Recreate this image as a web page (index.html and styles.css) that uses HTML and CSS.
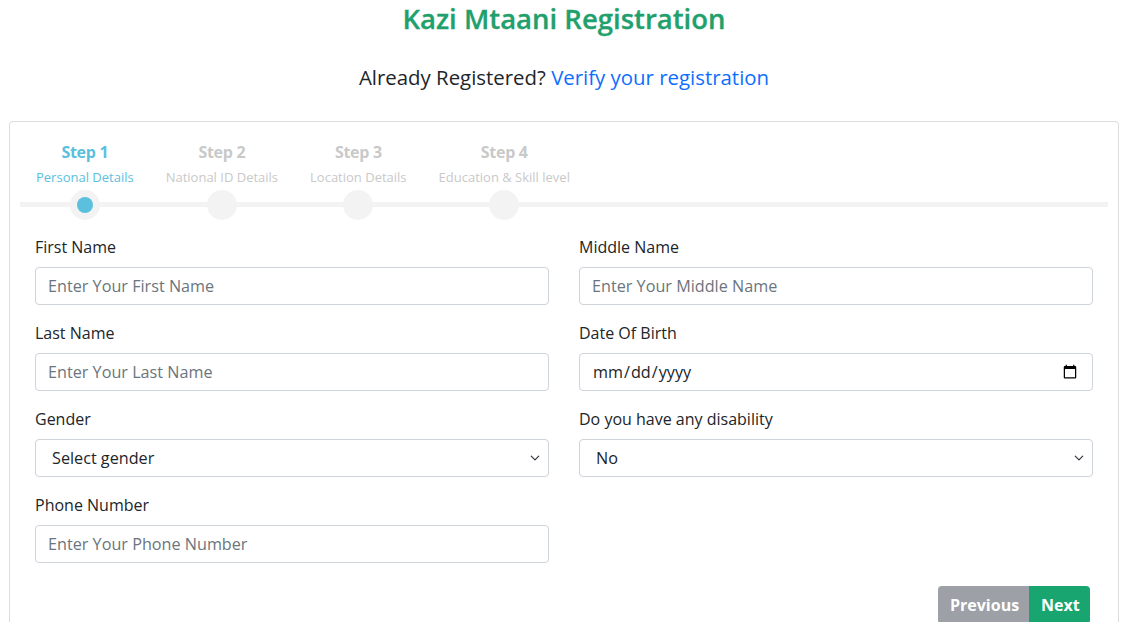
FILE: index.html
```html
<!DOCTYPE html>
<html>
<head>
<meta charset="utf-8">
<link rel="stylesheet" href="styles.css">
</head>
<body>
<div class="page">
  <h1 class="title">Kazi Mtaani Registration</h1>
  <p class="already">Already Registered? <a href="#" class="link">Verify your registration</a></p>
  <div class="card">
    <div class="steps">
      <div class="step active">
        <div class="step-title">Step 1</div>
        <div class="step-sub">Personal Details</div>
        <div class="dot"><span></span></div>
      </div>
      <div class="step">
        <div class="step-title">Step 2</div>
        <div class="step-sub">National ID Details</div>
        <div class="dot"></div>
      </div>
      <div class="step">
        <div class="step-title">Step 3</div>
        <div class="step-sub">Location Details</div>
        <div class="dot"></div>
      </div>
      <div class="step">
        <div class="step-title">Step 4</div>
        <div class="step-sub">Education &amp; Skill level</div>
        <div class="dot"></div>
      </div>
    </div>
    <form class="form">
      <div class="field">
        <label>First Name</label>
        <input type="text" placeholder="Enter Your First Name">
      </div>
      <div class="field">
        <label>Middle Name</label>
        <input type="text" placeholder="Enter Your Middle Name">
      </div>
      <div class="field">
        <label>Last Name</label>
        <input type="text" placeholder="Enter Your Last Name">
      </div>
      <div class="field">
        <label>Date Of Birth</label>
        <input type="date">
      </div>
      <div class="field">
        <label>Gender</label>
        <select><option>Select gender</option></select>
      </div>
      <div class="field">
        <label>Do you have any disability</label>
        <select><option>No</option></select>
      </div>
      <div class="field">
        <label>Phone Number</label>
        <input type="text" placeholder="Enter Your Phone Number">
      </div>
    </form>
    <div class="actions">
      <div class="btn-group">
        <button type="button" class="btn prev">Previous</button>
        <button type="button" class="btn next">Next</button>
      </div>
    </div>
  </div>
</div>
</body>
</html>
```

FILE: styles.css
```css
* { box-sizing: border-box; }
html, body { margin: 0; padding: 0; background: #fff; }
body {
  font-family: "Open Sans", "Liberation Sans", sans-serif;
  color: #212529;
  font-size: 16px;
}
.page {
  width: 1110px;
  margin-left: 9px;
}
.title {
  margin: 0;
  text-align: center;
  font-size: 27.5px;
  font-weight: 600;
  line-height: 37px;
  color: #1fa06c;
  -webkit-text-stroke: 0.3px #1fa06c;
}
.already {
  margin: 22px 0 0;
  text-align: center;
  font-size: 20.4px;
  line-height: 36px;
}
.link { color: #0d6efd; text-decoration: none; }
.card {
  margin-top: 26px;
  border: 1px solid #dcdcdc;
  border-radius: 4px;
  padding: 0 0 10px;
  height: 520px;
}
.steps {
  display: flex;
  margin: 18px 10px 0 10px;
  background: linear-gradient(#f3f3f3, #f3f3f3) no-repeat left 0 bottom 13px / 100% 5px;
}
.step {
  padding: 0 16px;
  display: flex;
  flex-direction: column;
  align-items: center;
  color: #c9c9c9;
}
.step-title {
  font-size: 16px;
  font-weight: 700;
  line-height: 24px;
  letter-spacing: -0.3px;
}
.step-sub {
  font-size: 13px;
  line-height: 20px;
  margin-top: 3px;
}
.step.active { color: #5bc0de; }
.dot {
  margin-top: 3px;
  width: 30px;
  height: 30px;
  border-radius: 50%;
  background: #f3f3f3;
  display: flex;
  align-items: center;
  justify-content: center;
}
.dot span {
  width: 16px;
  height: 16px;
  border-radius: 50%;
  background: #5bc0de;
}
.form {
  display: grid;
  grid-template-columns: 514px 514px;
  column-gap: 30px;
  row-gap: 16px;
  padding: 15px 25px 0 25px;
}
.field { display: flex; flex-direction: column; }
.field label {
  font-size: 16px;
  line-height: 24px;
  margin-bottom: 8px;
  color: #212529;
}
.field input, .field select {
  height: 38px;
  border: 1px solid #ced4da;
  border-radius: 4px;
  padding: 6px 12px;
  font-family: "Open Sans", "Liberation Sans", sans-serif;
  font-size: 16.2px;
  color: #212529;
  background-color: #fff;
}
.field input::placeholder { color: #6c757d; }
.field select {
  appearance: none;
  -webkit-appearance: none;
  padding-left: 16px;
  background-image: url("data:image/svg+xml,%3csvg xmlns='http://www.w3.org/2000/svg' viewBox='0 0 16 16'%3e%3cpath fill='none' stroke='%23343a40' stroke-linecap='round' stroke-linejoin='round' stroke-width='2' d='M2 5l6 6 6-6'/%3e%3c/svg%3e");
  background-repeat: no-repeat;
  background-position: right 8px center;
  background-size: 10px 10px;
}
.actions {
  display: flex;
  justify-content: flex-end;
  padding-right: 28px;
  margin-top: 23px;
}
.btn-group { display: flex; }
.btn {
  border: none;
  height: 38px;
  padding: 0 12px;
  font-family: "Open Sans", "Liberation Sans", sans-serif;
  font-size: 16px;
  font-weight: 700;
  color: #fff;
}
.btn.prev {
  background: #9da1a7;
  border-radius: 4px 0 0 4px;
  width: 91px;
}
.btn.next {
  background: #19a56f;
  border-radius: 0 4px 4px 0;
  width: 61px;
}
```
